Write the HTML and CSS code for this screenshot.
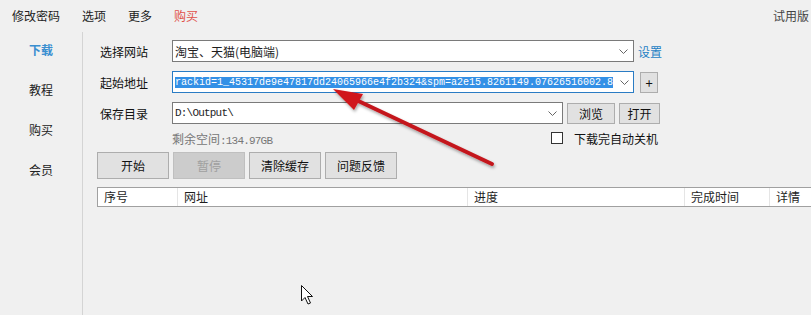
FILE: index.html
```html
<!DOCTYPE html>
<html lang="zh-CN">
<head>
  <meta charset="UTF-8">
  <title>下载器</title>
  <link rel="stylesheet" href="styles.css">
</head>
<body>

<!-- Top menu -->
<div class="menubar">
  <span class="menu-item">修改密码</span>
  <span class="menu-item">选项</span>
  <span class="menu-item">更多</span>
  <span class="menu-item menu-buy">购买</span>
  <span class="trial">试用版</span>
</div>

<div class="wrap">
  <!-- Side nav -->
  <nav class="side">
    <div class="side-item active">下载</div>
    <div class="side-item">教程</div>
    <div class="side-item">购买</div>
    <div class="side-item">会员</div>
  </nav>

  <main class="main">
    <div class="row">
      <span class="label">选择网站</span>
      <div class="field field-wide">
        <span class="field-text">淘宝、天猫(电脑端)</span>
        <svg class="chev" width="9" height="5" viewBox="0 0 9 5"><path d="M0.5 0.5 L4.5 4.5 L8.5 0.5" fill="none" stroke="#666" stroke-width="1"/></svg>
      </div>
      <span class="link">设置</span>
    </div>

    <div class="row">
      <span class="label">起始地址</span>
      <div class="field field-wide focused">
        <span class="field-text mono url"><span class="sel">rackid=1_45317de9e47817dd24065966e4f2b324&amp;spm=a2e15.8261149.07626516002.8</span></span>
        <svg class="chev" width="9" height="5" viewBox="0 0 9 5"><path d="M0.5 0.5 L4.5 4.5 L8.5 0.5" fill="none" stroke="#666" stroke-width="1"/></svg>
      </div>
      <button class="btn btn-plus">+</button>
    </div>

    <div class="row">
      <span class="label">保存目录</span>
      <div class="field field-dir">
        <span class="field-text mono">D:\Output\</span>
        <svg class="chev" width="9" height="5" viewBox="0 0 9 5"><path d="M0.5 0.5 L4.5 4.5 L8.5 0.5" fill="none" stroke="#666" stroke-width="1"/></svg>
      </div>
      <button class="btn btn-small btn-browse">浏览</button>
      <button class="btn btn-small btn-open">打开</button>
    </div>

    <div class="row-info">
      <span class="space">剩余空间<span class="mono">:134.97GB</span></span>
      <span class="check"></span>
      <span class="check-label">下载完自动关机</span>
    </div>

    <div class="actions">
      <button class="btn btn-big">开始</button>
      <button class="btn btn-big" disabled>暂停</button>
      <button class="btn btn-big">清除缓存</button>
      <button class="btn btn-big">问题反馈</button>
    </div>

    <div class="list-head">
      <div class="col col-no">序号</div>
      <div class="col col-url">网址</div>
      <div class="col col-prog">进度</div>
      <div class="col col-time">完成时间</div>
      <div class="col col-detail">详情</div>
    </div>
  </main>
</div>

<!-- annotation arrow and mouse pointer drawn over the window -->
<svg class="overlay" width="811" height="315" viewBox="0 0 811 315">
  <defs>
    <filter id="shade" x="-10%" y="-10%" width="120%" height="130%">
      <feDropShadow dx="1" dy="2" stdDeviation="1.5" flood-color="#000" flood-opacity="0.35"/>
    </filter>
  </defs>
  <g filter="url(#shade)">
    <line x1="492" y1="164" x2="352" y2="98" stroke="#c4161c" stroke-width="4" stroke-linecap="round"/>
    <polygon points="333,89 354,110 363,94" fill="#d0161c"/>
  </g>
  <path d="M301.5 285.5 L301.5 301 L305 297.5 L308 304 L310.5 303 L307.5 296.5 L312.5 296.5 Z" fill="#fff" stroke="#111" stroke-width="1" stroke-linejoin="round"/>
</svg>

</body>
</html>
```

FILE: styles.css
```css
body {
  margin: 0;
  width: 811px;
  height: 315px;
  overflow: hidden;
  background-color: #f0f0f0;
  font-family: "Noto Sans CJK SC", "Noto Sans", sans-serif;
  font-size: 12px;
  color: #1e1e1e;
  position: relative;
}
button {
  font-family: inherit;
  font-size: 12px;
}
.mono {
  font-family: "Liberation Mono", "DejaVu Sans Mono", monospace;
  font-size: 11px;
  letter-spacing: -0.8px;
}
.url {
  font-size: 10px;
  letter-spacing: 0;
}

/* menu */
.menubar {
  height: 30px;
  display: flex;
  align-items: center;
  padding-left: 12px;
  gap: 22px;
}
.menu-item {
  color: #222;
}
.menu-buy {
  color: #e0504a;
}
.trial {
  margin-left: auto;
  margin-right: 2px;
  color: #444;
  white-space: nowrap;
}

.wrap {
  display: flex;
  height: 285px;
}

/* side nav */
.side {
  width: 82px;
  flex: none;
  border-right: 1px solid #d4d4d4;
  margin-top: 2px;
  display: flex;
  flex-direction: column;
  gap: 4px;
}
.side-item {
  height: 36px;
  line-height: 36px;
  text-align: center;
  color: #222;
}
.side-item.active {
  color: #3a8fd0;
  font-weight: bold;
}

/* main form */
.main {
  flex: 1;
  padding: 10px 0 0 14px;
  min-width: 0;
}
.row {
  display: flex;
  align-items: center;
  height: 22px;
  margin-bottom: 9px;
}
.label {
  width: 72px;
  padding-left: 3px;
  flex: none;
  color: #111;
}
.field {
  height: 22px;
  box-sizing: border-box;
  border: 1px solid #7a7a7a;
  background: #fff;
  display: flex;
  align-items: center;
  padding: 0 5px 0 1px;
  flex: none;
  overflow: hidden;
}
.field-wide {
  width: 462px;
}
.field-dir {
  width: 391px;
}
.focused {
  border-color: #2a7cc4;
  padding-right: 4px;
}
.field-text {
  flex: 1;
  white-space: nowrap;
  overflow: hidden;
  padding-left: 1px;
}
.sel {
  background: #3390e6;
  color: #fff;
  padding: 2px 0;
}
.chev {
  flex: none;
  margin-left: 6px;
}
.focused .chev {
  margin-left: 3px;
}
.link {
  margin-left: 4px;
  color: #1d7fc4;
}

/* buttons */
.btn {
  background: #e1e1e1;
  border: 1px solid #adadad;
  color: #111;
  padding: 0;
  box-sizing: border-box;
}
.btn:disabled {
  background: #cccccc;
  border-color: #bfbfbf;
  color: #a0a0a0;
}
.btn-plus {
  width: 18px;
  height: 21px;
  margin-left: 6px;
  font-size: 13px;
}
.btn-small {
  height: 21px;
  margin-left: 4px;
}
.btn-browse {
  width: 48px;
}
.btn-open {
  width: 41px;
}
.btn-big {
  width: 72px;
  height: 27px;
}

.row-info {
  display: flex;
  align-items: center;
  height: 16px;
  margin-top: -3px;
}
.space {
  margin-left: 75px;
  width: 379px;
  flex: none;
  color: #777;
}
.check {
  width: 12px;
  height: 12px;
  box-sizing: border-box;
  border: 1px solid #333;
  background: #fff;
  flex: none;
}
.check-label {
  margin-left: 11px;
  color: #111;
}

.actions {
  display: flex;
  gap: 4px;
  margin-top: 6px;
}

/* list header */
.list-head {
  display: flex;
  margin-top: 8px;
  height: 20px;
  box-sizing: border-box;
  border: 1px solid #a0a0a0;
  border-right: none;
  background: #fff;
  width: 730px;
}
.col {
  flex: none;
  box-sizing: border-box;
  padding-left: 6px;
  line-height: 18px;
  border-right: 1px solid #e5e5e5;
}
.col-no { width: 80px; }
.col-url { width: 290px; }
.col-prog { width: 217px; }
.col-time { width: 85px; }
.col-detail { width: 58px; border-right: none; }

.overlay {
  position: absolute;
  left: 0;
  top: 0;
  pointer-events: none;
}
```
